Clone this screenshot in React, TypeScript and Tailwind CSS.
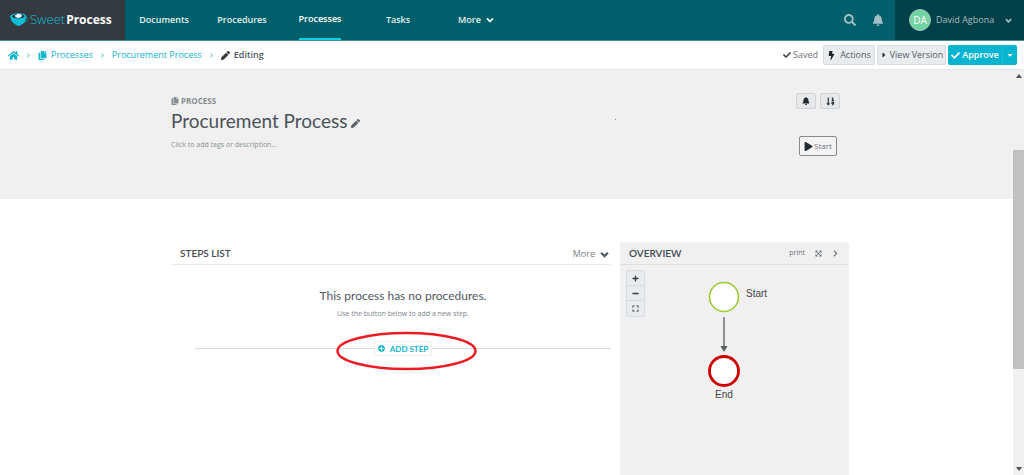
import type { ReactNode } from 'react';
import {
  FaBell,
  FaBolt,
  FaCaretDown,
  FaCaretRight,
  FaCheck,
  FaChevronDown,
  FaChevronRight,
  FaCopy,
  FaExpand,
  FaExpandArrowsAlt,
  FaHome,
  FaMinus,
  FaPen,
  FaPlay,
  FaPlus,
  FaPlusCircle,
  FaSearch,
  FaSortNumericDown,
} from 'react-icons/fa';

function Logo() {
  return (
    <a
      href="#home"
      aria-label="SweetProcess"
      className="flex w-[125px] shrink-0 items-center gap-[2px] bg-[#343a40] pl-[10px]"
    >
      <svg viewBox="0 0 52 40" className="h-[14px] w-[18px] shrink-0" aria-hidden="true">
        <path d="M42 14c9-3 12 3 7 8-3 3-8 5-13 6" fill="none" stroke="#149bb0" strokeWidth="2.5" />
        <path d="M1 9c0 12 8 21 18 26 4 3 8 3 12 0 10-5 16-14 16-26z" fill="#10bdd6" />
        <ellipse cx="24" cy="9" rx="23" ry="8.5" fill="#10bdd6" />
        <ellipse cx="24" cy="9" rx="18" ry="6" fill="#20343c" />
        <path d="M14 7l9-5 11 3-1 6-9 3-8-2z" fill="#f4fbfc" />
      </svg>
      <span className="flex items-baseline gap-px whitespace-nowrap">
        <span className="text-[13px] font-light text-[#12bfd8]">Sweet</span>
        <span className="text-[12px] font-bold text-white">Process</span>
      </span>
    </a>
  );
}

function ChevronDown({ className }: { className: string }) {
  return (
    <svg viewBox="0 0 10 10" className={className} aria-hidden="true">
      <path d="M1.200 3l3.800 3.800 3.800-3.800" fill="none" stroke="currentColor" strokeWidth="2.400" />
    </svg>
  );
}

function NavItem({ children, active = false }: { children: ReactNode; active?: boolean }) {
  return (
    <a href="#nav" className="flex w-[78px] justify-center text-[9px] font-semibold text-[#e3eff0]">
      <span
        className={
          active
            ? 'flex items-center border-b-2 border-[#00d0e8] text-white'
            : 'flex items-center gap-[5px]'
        }
      >
        {children}
      </span>
    </a>
  );
}

function Crumb({ children }: { children: ReactNode }) {
  return (
    <a href="#crumb" className="flex items-center gap-1 text-[#12b5cb]">
      {children}
    </a>
  );
}

function Separator() {
  return <FaChevronRight className="size-[5px] text-[#5cbccb]" aria-hidden="true" />;
}

const toolButton =
  'flex h-5 items-center rounded-xs border border-[#d6dbe0] bg-[#e9ecef] text-[9px] text-[#555c63]';
const squareButton =
  'flex h-4 w-5 items-center justify-center rounded-xs border border-[#cfd5da] bg-[#e6e8ea] text-[#212a31]';
const zoomButton = 'flex h-[15px] w-[17px] items-center justify-center text-[#343a40]';

function TopBar() {
  return (
    <header className="flex h-[41px] border-b border-[#4b8c94] bg-[#005f6b]">
      <Logo />
      <nav aria-label="Main" className="flex">
        <NavItem>Documents</NavItem>
        <NavItem>Procedures</NavItem>
        <NavItem active>Processes</NavItem>
        <NavItem>Tasks</NavItem>
        <NavItem>
          More <ChevronDown className="size-2" />
        </NavItem>
      </nav>
      <div className="ml-auto flex items-center gap-4 pr-[11px] text-[#a3bfc3]">
        <button type="button" aria-label="Search">
          <FaSearch className="size-3" />
        </button>
        <button type="button" aria-label="Notifications">
          <FaBell className="size-3" />
        </button>
      </div>
      <button
        type="button"
        className="flex w-[129px] items-center bg-[#004049] pl-[14px] text-[9px] text-[#a9bcc0]"
      >
        <span className="flex size-[22px] items-center justify-center rounded-full border border-[#a5c4bd] bg-[#74d3a2] text-[10px] text-white">
          DA
        </span>
        <span className="ml-[5px] whitespace-nowrap">David Agbona</span>
        <ChevronDown className="mr-3 ml-auto size-[7px]" />
      </button>
    </header>
  );
}

function BreadcrumbBar() {
  return (
    <div className="flex h-[29px] items-center border-b border-[#e6e6e6] bg-white pr-[7px] pl-2 text-[9px]">
      <nav aria-label="Breadcrumb" className="flex items-center gap-[7px] whitespace-nowrap">
        <a href="#home" aria-label="Home" className="text-[#12b5cb]">
          <FaHome className="size-[11px]" />
        </a>
        <Separator />
        <Crumb>
          <FaCopy className="size-[9px]" /> Processes
        </Crumb>
        <Separator />
        <Crumb>Procurement Process</Crumb>
        <Separator />
        <span className="flex items-center gap-1 font-semibold text-[#50565c]">
          <FaPen className="size-[9px] text-[#343a40]" /> Editing
        </span>
      </nav>
      <div className="ml-auto flex items-center gap-[2px] whitespace-nowrap">
        <span className="mr-[3px] flex items-center gap-[2px] text-[#6c757d]">
          <FaCheck className="size-2 text-[#343a40]" /> Saved
        </span>
        <button type="button" className={`${toolButton} w-[52px] justify-center gap-1`}>
          <FaBolt className="size-[9px] text-[#212529]" /> Actions
        </button>
        <button type="button" className={`${toolButton} w-[69px] justify-center gap-[2px]`}>
          <FaCaretRight className="size-2 text-[#212529]" /> View Version
        </button>
        <div className="flex h-5 overflow-hidden rounded-xs bg-[#08b5d0] font-semibold text-white">
          <button type="button" className="flex w-[54px] items-center justify-center gap-[2px]">
            <FaCheck className="size-[9px]" /> Approve
          </button>
          <button
            type="button"
            aria-label="More approve options"
            className="flex w-[15px] items-center justify-center border-l border-[#22bdd5]"
          >
            <FaCaretDown className="size-2" />
          </button>
        </div>
      </div>
    </div>
  );
}

function Hero() {
  return (
    <section className="relative h-[129px] bg-[#f0f0f0]">
      <div className="mx-auto flex max-w-[685px] justify-between pt-[23px] pr-[9px] pl-[7px]">
        <div>
          <p className="flex items-center gap-[2px] text-[8px] leading-4 font-bold text-[#868e96]">
            <FaCopy className="size-2" /> PROCESS
          </p>
          <h1 className="flex items-center gap-1 font-[Lato] text-[19px] leading-6 text-[#4a5259]">
            Procurement Process
            <button type="button" aria-label="Edit title" className="mt-1 text-[#5c646b]">
              <FaPen className="size-[9px]" />
            </button>
          </h1>
          <p className="mt-[6px] text-[7px] leading-3 text-[#8b9095]">Click to add tags or description...</p>
        </div>
        <div className="flex flex-col items-end">
          <div className="flex gap-1">
            <button type="button" aria-label="Notifications" className={squareButton}>
              <FaBell className="size-2" />
            </button>
            <button type="button" aria-label="Sort" className={squareButton}>
              <FaSortNumericDown className="size-[9px]" />
            </button>
          </div>
          <button
            type="button"
            className="mt-[27px] mr-[3px] flex h-5 w-[38px] items-center justify-center gap-px rounded-xs border border-[#868b90] bg-[#f4f4f4] text-[8px] text-[#6c757d]"
          >
            <FaPlay className="size-[9px] text-[#212a31]" /> Start
          </button>
        </div>
      </div>
      <span aria-hidden="true" className="absolute top-[49px] left-[615px] size-px bg-[#8a8a8a]" />
    </section>
  );
}

function StepsList() {
  return (
    <section className="min-w-0 flex-1">
      <div className="flex h-[23px] items-center justify-between border-b border-[#e9e9e9] pr-[2px] pl-[9px]">
        <h2 className="font-[Lato] text-[10px] font-semibold text-[#444b52]">STEPS LIST</h2>
        <button type="button" className="mt-[2px] flex items-center gap-[5px] text-[9px] text-[#7a8188]">
          More <ChevronDown className="size-[9px] text-[#545b62]" />
        </button>
      </div>
      <div className="pt-[21px] pl-6 text-center">
        <h3 className="font-[Lato] text-[12px] leading-5 text-[#50575e]">This process has no procedures.</h3>
        <p className="mt-[2px] text-[7px] leading-3 text-[#7d8389]">
          Use the button below to add a new step.
        </p>
        <div className="relative mt-[21px] flex items-center">
          <span className="h-px flex-1 bg-[#dadada]" />
          <button
            type="button"
            className="flex h-[15px] w-[58px] items-center justify-center gap-[5px] rounded-xs border border-[#efefef] bg-white font-[Lato] text-[8px] font-bold whitespace-nowrap text-[#12b5cb]"
          >
            <FaPlusCircle className="size-[7px]" /> ADD STEP
          </button>
          <span className="h-px flex-1 bg-[#dadada]" />
          <svg
            viewBox="0 0 142 40"
            aria-hidden="true"
            className="pointer-events-none absolute top-1/2 left-1/2 mt-[2px] ml-1 h-10 w-[142px] -translate-x-1/2 -translate-y-1/2"
          >
            <ellipse cx="70.500" cy="20" rx="69" ry="18" fill="none" stroke="#ed1c24" strokeWidth="2.500" />
          </svg>
        </div>
      </div>
    </section>
  );
}

function Overview() {
  return (
    <section className="flex w-[229px] shrink-0 flex-col rounded-t-xs bg-[#f0f0f0]">
      <div className="flex h-[23px] items-center border-b border-[#e0e0e0] px-[9px]">
        <h2 className="font-[Lato] text-[10px] font-semibold text-[#444b52]">OVERVIEW</h2>
        <div className="ml-auto flex items-center gap-[10px] text-[#6c757d]">
          <button type="button" className="text-[7px]">
            print
          </button>
          <button type="button" aria-label="Full screen">
            <FaExpandArrowsAlt className="size-[7px]" />
          </button>
          <button type="button" aria-label="Collapse" className="pr-px">
            <FaChevronRight className="size-[7px]" />
          </button>
        </div>
      </div>
      <div className="relative flex-1">
        <div className="absolute top-[5px] left-[6px] flex flex-col divide-y divide-[#d6dce2] rounded-xs border border-[#d6dce2] bg-[#e9ecef]">
          <button type="button" aria-label="Zoom in" className={zoomButton}>
            <FaPlus className="size-[7px]" />
          </button>
          <button type="button" aria-label="Zoom out" className={zoomButton}>
            <FaMinus className="size-[7px]" />
          </button>
          <button type="button" aria-label="Fit" className={zoomButton}>
            <FaExpand className="size-[7px]" />
          </button>
        </div>
        <svg
          viewBox="0 0 229 140"
          role="img"
          aria-label="Flow from Start to End"
          className="h-[140px] w-[229px] font-['Liberation_Sans']"
        >
          <circle cx="104" cy="32" r="14.5" fill="#fff" stroke="#9acd32" strokeWidth="1.6" />
          <path d="M104 52v31" stroke="#737b7b" strokeWidth="1.6" />
          <path d="M100.5 81h7l-3.5 6z" fill="#566060" />
          <circle cx="104" cy="106" r="14.5" fill="#fff" stroke="#cc0000" strokeWidth="2.8" />
          <text x="126" y="32" fontSize="10" fill="#444">Start</text>
          <text x="104" y="133" fontSize="10" fill="#444" textAnchor="middle">End</text>
        </svg>
      </div>
    </section>
  );
}

function ScrollTrack() {
  return (
    <div aria-hidden="true" className="flex w-[11px] shrink-0 flex-col items-center bg-[#f0f0f0] py-1 text-[#505050]">
      <svg viewBox="0 0 6 4" className="h-1 w-[6px]">
        <path d="M0 4l3-4 3 4z" fill="currentColor" />
      </svg>
      <div className="flex min-h-0 w-full flex-1 flex-col pt-[72px] pb-[98px]">
        <div className="w-full flex-1 bg-[#c1c1c1]" />
      </div>
      <svg viewBox="0 0 6 4" className="h-1 w-[6px]">
        <path d="M0 0l3 4 3-4z" fill="currentColor" />
      </svg>
    </div>
  );
}

export default function App() {
  return (
    <div className="flex min-h-screen flex-col bg-white font-['Open_Sans','Noto_Sans',sans-serif]">
      <TopBar />
      <BreadcrumbBar />
      <div className="flex flex-1">
        <main className="flex min-w-0 flex-1 flex-col">
          <Hero />
          <div className="mx-auto flex w-full max-w-[685px] flex-1 gap-[9px] pt-[43px] pl-[7px]">
            <StepsList />
            <Overview />
          </div>
        </main>
        <ScrollTrack />
      </div>
    </div>
  );
}
